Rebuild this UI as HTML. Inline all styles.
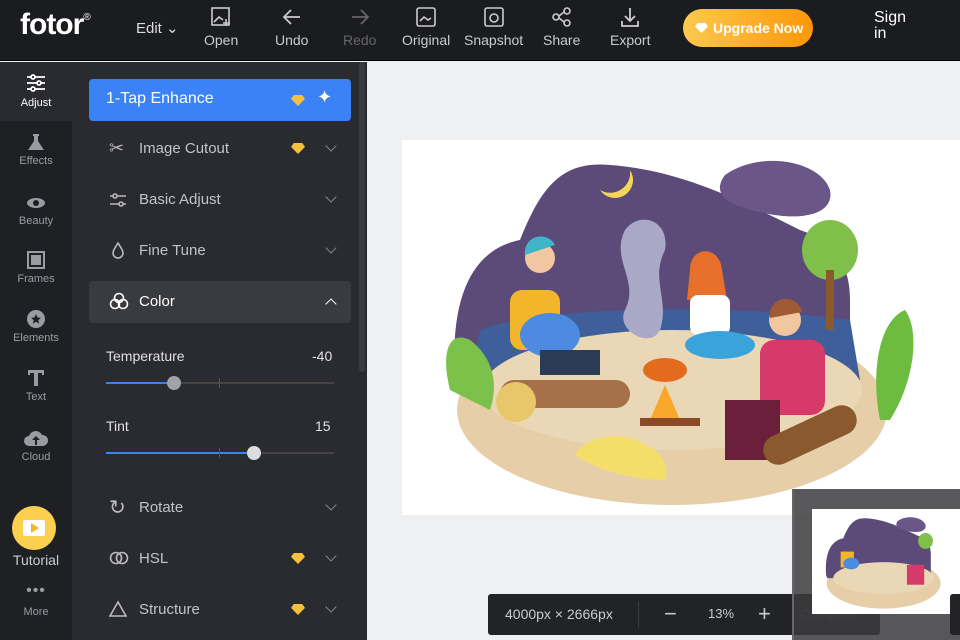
<!DOCTYPE html><html><head><meta charset="utf-8"><style>
*{margin:0;padding:0;box-sizing:border-box}
body{width:960px;height:640px;overflow:hidden;background:#eff0f2;font-family:"Liberation Sans",sans-serif;position:relative}
.top{position:absolute;left:0;top:0;width:960px;height:61px;background:#1b1c1f;border-bottom:1px solid #000}
.logo{position:absolute;left:20px;top:8px;color:#fff;font-size:30px;font-weight:bold;letter-spacing:-1px}
.logo sup{font-size:10px;font-weight:normal;vertical-align:top;position:relative;top:4px}
.tb{position:absolute;top:6px;color:#c9cbd0;font-size:14px;text-align:center}
.tb svg{display:block;margin:0 auto 4px}
.rail{position:absolute;left:0;top:62px;width:72px;height:578px;background:#1f2024}
.ri{position:absolute;left:0;width:72px;text-align:center;color:#9a9ca3;font-size:11px}
.panel{position:absolute;left:72px;top:62px;width:295px;height:578px;background:#2a2b30}
.row{position:absolute;left:17px;width:262px;height:42px;color:#c1c3c9;font-size:15px}
.row .t{position:absolute;left:50px;top:12px}
.chev{position:absolute;right:16px;top:14px;width:8px;height:8px;border-right:1.5px solid #888;border-bottom:1.5px solid #888;transform:rotate(45deg)}
.dia{position:absolute;width:14px;height:11px;background:#f4c03d;clip-path:polygon(20% 0,80% 0,100% 35%,50% 100%,0 35%)}
</style></head><body>
<div class="top">
<div class="logo">fotor<sup>®</sup></div>
<div class="tb" style="left:136px;top:19px;font-size:15px;color:#ddd">Edit ⌄</div>
<div class="tb" style="left:204px"><svg width="22" height="22" viewBox="0 0 22 22" fill="none" stroke="#ccc" stroke-width="1.6"><rect x="2" y="2" width="17" height="17"/><path d="M4 16l5-5 4 3"/><path d="M16 13v7M13 17h7"/></svg>Open</div>
<div class="tb" style="left:275px"><svg width="22" height="22" viewBox="0 0 22 22" fill="none" stroke="#ccc" stroke-width="1.8"><path d="M19 11H4M10 4l-7 7 7 7"/></svg>Undo</div>
<div class="tb" style="left:343px;color:#666"><svg width="22" height="22" viewBox="0 0 22 22" fill="none" stroke="#666" stroke-width="1.8"><path d="M3 11h15M12 4l7 7-7 7"/></svg>Redo</div>
<div class="tb" style="left:402px"><svg width="22" height="22" viewBox="0 0 22 22" fill="none" stroke="#ccc" stroke-width="1.6"><rect x="2" y="2" width="18" height="18" rx="2"/><path d="M5 15l4-4 4 3 3-2"/></svg>Original</div>
<div class="tb" style="left:464px"><svg width="22" height="22" viewBox="0 0 22 22" fill="none" stroke="#ccc" stroke-width="1.6"><rect x="2" y="2" width="18" height="18" rx="2"/><circle cx="11" cy="12" r="4"/></svg>Snapshot</div>
<div class="tb" style="left:543px"><svg width="22" height="22" viewBox="0 0 22 22" fill="none" stroke="#ccc" stroke-width="1.6"><circle cx="5" cy="11" r="3"/><circle cx="16" cy="5" r="3"/><circle cx="16" cy="17" r="3"/><path d="M8 10l5-4M8 12l5 4"/></svg>Share</div>
<div class="tb" style="left:610px"><svg width="22" height="22" viewBox="0 0 22 22" fill="none" stroke="#ccc" stroke-width="1.8"><path d="M11 2v13M6 10l5 5 5-5M3 15v5h16v-5"/></svg>Export</div>
<div style="position:absolute;left:683px;top:9px;width:130px;height:38px;border-radius:19px;background:linear-gradient(90deg,#fcc94e,#fd9708);color:#fff;font-weight:bold;font-size:14px;line-height:38px;padding-left:30px">Upgrade Now<span style="position:absolute;left:12px;top:14px;width:13px;height:10px;background:#fff;clip-path:polygon(20% 0,80% 0,100% 35%,50% 100%,0 35%)"></span></div>
<div style="position:absolute;left:874px;top:10px;color:#fff;font-size:16px;line-height:16px">Sign<br>in</div>
</div>
<div class="rail">
<div style="position:absolute;left:0;top:0;width:72px;height:59px;background:#2a2b30"></div>
<div class="ri" style="top:10px;color:#fff"><svg width="22" height="22" viewBox="0 0 22 22" stroke="#fff" stroke-width="1.8" fill="#2a2b30"><path d="M2 5h18M2 11h18M2 17h18"/><circle cx="8" cy="5" r="2"/><circle cx="14" cy="11" r="2"/><circle cx="8" cy="17" r="2"/></svg><br>Adjust</div>
<div class="ri" style="top:70px"><svg width="20" height="20" viewBox="0 0 20 20" fill="#9a9ca3"><path d="M7 2h6v2h-1v5l6 9H2l6-9V4H7z"/></svg><br>Effects</div>
<div class="ri" style="top:130px"><svg width="22" height="20" viewBox="0 0 22 20" fill="#9a9ca3"><ellipse cx="11" cy="11" rx="9" ry="5"/><circle cx="11" cy="11" r="3" fill="#1f2024"/></svg><br>Beauty</div>
<div class="ri" style="top:188px"><svg width="20" height="20" viewBox="0 0 20 20" fill="none" stroke="#9a9ca3" stroke-width="2"><rect x="2" y="2" width="16" height="16"/><rect x="6" y="6" width="8" height="8" fill="#9a9ca3"/></svg><br>Frames</div>
<div class="ri" style="top:247px"><svg width="20" height="20" viewBox="0 0 20 20"><circle cx="10" cy="10" r="9" fill="#9a9ca3"/><path d="M10 5l1.5 3.5 3.5.3-2.7 2.3.9 3.6L10 12.8 6.8 14.7l.9-3.6L5 8.8l3.5-.3z" fill="#1f2024"/></svg><br>Elements</div>
<div class="ri" style="top:306px"><svg width="20" height="20" viewBox="0 0 20 20" fill="#9a9ca3"><path d="M2 2h16v5h-2V5h-4v13H8V5H4v2H2z"/></svg><br>Text</div>
<div class="ri" style="top:366px"><svg width="26" height="20" viewBox="0 0 26 20" fill="#9a9ca3"><path d="M6 18a5 5 0 010-10 7 7 0 0113-1 5 5 0 011 11z"/><path d="M13 8l-4 4h3v5h2v-5h3z" fill="#1f2024"/></svg><br>Cloud</div>
<div style="position:absolute;left:12px;top:444px;width:44px;height:44px;border-radius:50%;background:#fcd04f"><div style="position:absolute;left:11px;top:14px;width:22px;height:16px;background:#fff;border-radius:2px"></div><div style="position:absolute;left:19px;top:17px;border-left:8px solid #f3b820;border-top:5px solid transparent;border-bottom:5px solid transparent"></div></div>
<div class="ri" style="top:490px;font-size:14px;color:#c9cbd0">Tutorial</div>
<div class="ri" style="top:524px;font-size:16px;letter-spacing:1px;line-height:10px">•••</div>
<div class="ri" style="top:544px">More</div>
</div>
<div class="panel">
<div style="position:absolute;left:287px;top:0;width:6px;height:310px;background:#3a3b40;border-radius:3px"></div>
<div class="row" style="top:17px;background:#3b82f6;border-radius:4px;color:#fff"><span class="t" style="left:17px;top:11px;font-size:16px">1-Tap Enhance</span><span class="dia" style="left:202px;top:16px"></span><span style="position:absolute;left:228px;top:8px;font-size:18px">✦</span></div>
<div class="row" style="top:66px"><span style="position:absolute;left:20px;top:10px;font-size:18px;color:#bbb">✂</span><span class="t">Image Cutout</span><span class="dia" style="left:202px;top:15px"></span><span class="chev"></span></div>
<div class="row" style="top:117px"><svg style="position:absolute;left:20px;top:13px" width="18" height="16" viewBox="0 0 18 16" stroke="#bbb" stroke-width="1.6" fill="#2a2b30"><path d="M1 4h16M1 12h16"/><circle cx="6" cy="4" r="2"/><circle cx="12" cy="12" r="2"/></svg><span class="t">Basic Adjust</span><span class="chev"></span></div>
<div class="row" style="top:168px"><svg style="position:absolute;left:22px;top:12px" width="14" height="18" viewBox="0 0 14 18" stroke="#bbb" stroke-width="1.6" fill="none"><path d="M7 1C4 6 2 8 2 11a5 5 0 0010 0c0-3-2-5-5-10z"/></svg><span class="t">Fine Tune</span><span class="chev"></span></div>
<div class="row" style="top:219px;background:#3a3b40;border-radius:4px;color:#fff"><svg style="position:absolute;left:20px;top:11px" width="20" height="18" viewBox="0 0 20 18" stroke="#fff" stroke-width="1.6" fill="none"><circle cx="10" cy="6" r="4.5"/><circle cx="6" cy="12" r="4.5"/><circle cx="14" cy="12" r="4.5"/></svg><span class="t">Color</span><span class="chev" style="transform:rotate(225deg);top:19px;border-color:#fff"></span></div>
<div style="position:absolute;left:34px;top:286px;color:#e0e0e4;font-size:14px">Temperature</div>
<div style="position:absolute;left:240px;top:286px;color:#e0e0e4;font-size:14px">-40</div>
<div style="position:absolute;left:34px;top:320px;width:228px;height:2px;background:#444"></div>
<div style="position:absolute;left:34px;top:320px;width:68px;height:2px;background:#3b82f6"></div>
<div style="position:absolute;left:147px;top:316px;width:1px;height:10px;background:#555"></div>
<div style="position:absolute;left:95px;top:314px;width:14px;height:14px;border-radius:50%;background:#a0a2a8"></div>
<div style="position:absolute;left:34px;top:356px;color:#e0e0e4;font-size:14px">Tint</div>
<div style="position:absolute;left:243px;top:356px;color:#e0e0e4;font-size:14px">15</div>
<div style="position:absolute;left:34px;top:390px;width:228px;height:2px;background:#444"></div>
<div style="position:absolute;left:34px;top:390px;width:148px;height:2px;background:#3b82f6"></div>
<div style="position:absolute;left:147px;top:386px;width:1px;height:10px;background:#555"></div>
<div style="position:absolute;left:175px;top:384px;width:14px;height:14px;border-radius:50%;background:#ddd"></div>
<div class="row" style="top:425px"><span style="position:absolute;left:20px;top:8px;font-size:20px;color:#bbb">↻</span><span class="t">Rotate</span><span class="chev"></span></div>
<div class="row" style="top:476px"><svg style="position:absolute;left:20px;top:13px" width="20" height="14" viewBox="0 0 20 14" stroke="#bbb" stroke-width="1.6" fill="none"><circle cx="7" cy="7" r="5.5"/><circle cx="13" cy="7" r="5.5"/></svg><span class="t">HSL</span><span class="dia" style="left:202px;top:15px"></span><span class="chev"></span></div>
<div class="row" style="top:527px"><svg style="position:absolute;left:20px;top:11px" width="18" height="18" viewBox="0 0 18 18" stroke="#bbb" stroke-width="1.6" fill="none"><path d="M9 2L1 16h16z"/></svg><span class="t">Structure</span><span class="dia" style="left:202px;top:15px"></span><span class="chev"></span></div>
</div>
<div style="position:absolute;left:402px;top:140px;width:558px;height:375px;background:#fff">
<svg width="558" height="375" viewBox="402 140 558 375">
<ellipse cx="672" cy="410" rx="215" ry="95" fill="#e6cfa8"/>
<path d="M455 380C450 300 470 250 520 240C540 190 560 160 610 165C680 170 740 200 800 230C830 240 850 260 850 300L850 390L460 390Z" fill="#5c4a78"/>
<path d="M725 175C760 150 820 160 830 190C835 215 800 222 760 212C730 206 710 195 725 175Z" fill="#6b5688"/>
<path d="M480 330C530 310 700 300 850 320L860 380 470 380Z" fill="#3f5f9a"/>
<ellipse cx="672" cy="390" rx="190" ry="60" fill="#ead7b6"/>
<ellipse cx="830" cy="250" rx="28" ry="30" fill="#7fbf4a"/>
<rect x="826" y="270" width="8" height="60" fill="#8a5a2e"/>
<path d="M450 390C440 350 450 330 470 340C490 355 500 380 490 410Z" fill="#7cc24a"/>
<path d="M880 420C870 370 880 320 905 310C920 330 915 380 890 420Z" fill="#6dbb3f"/>
<path d="M625 230C610 260 640 280 625 310C615 330 650 350 660 330C670 300 650 280 665 250C670 220 640 210 625 230Z" fill="#a9a9c7"/>
<path d="M600 190a20 20 0 0030-20 15 15 0 01-30 20z" fill="#f5d658"/>
<rect x="510" y="290" width="50" height="60" rx="12" fill="#f2b52c"/>
<circle cx="540" cy="258" r="15" fill="#f2c6a0"/><path d="M525 255a16 16 0 0130-10z" fill="#3fb6c8"/>
<ellipse cx="550" cy="335" rx="30" ry="22" fill="#4d8be0"/>
<rect x="540" y="350" width="60" height="25" fill="#2b3a55"/>
<rect x="500" y="380" width="130" height="28" rx="14" fill="#a6714a"/>
<circle cx="516" cy="402" r="20" fill="#e8c66a"/>
<circle cx="705" cy="268" r="14" fill="#f2c6a0"/><path d="M690 270c0-25 30-25 32 0l5 30h-40z" fill="#e8702d"/>
<rect x="690" y="295" width="40" height="40" rx="8" fill="#fff"/>
<ellipse cx="720" cy="345" rx="35" ry="14" fill="#3aa3d9"/>
<circle cx="785" cy="320" r="16" fill="#f2c6a0"/><path d="M770 318a16 16 0 0132-6z" fill="#a05a35"/>
<rect x="760" y="340" width="65" height="75" rx="14" fill="#d63a6b"/>
<rect x="725" y="400" width="55" height="60" fill="#6a1f3a"/>
<rect x="760" y="420" width="100" height="30" rx="15" transform="rotate(-25 810 435)" fill="#8a5a2e"/>
<ellipse cx="665" cy="370" rx="22" ry="12" fill="#e36b1e"/>
<path d="M650 420l15-35 15 35z" fill="#f8a72b"/>
<rect x="640" y="418" width="60" height="8" fill="#8a4a2a"/>
<path d="M575 455c10-20 50-25 70-10 15 5 25 20 20 35-20 0-60 -5-90-25z" fill="#f4de6a"/>
</svg>
</div>
<div style="position:absolute;left:488px;top:594px;width:392px;height:41px;background:#222327;border-radius:3px;color:#c9cbd0;font-size:14px">
<span style="position:absolute;left:17px;top:12px">4000px × 2666px</span>
<div style="position:absolute;left:150px;top:8px;width:1px;height:26px;background:#3a3b40"></div>
<span style="position:absolute;left:176px;top:7px;font-size:22px">−</span>
<span style="position:absolute;left:220px;top:12px;font-size:13px">13%</span>
<span style="position:absolute;left:270px;top:7px;font-size:22px">+</span>
<span style="position:absolute;left:312px;top:12px;color:#555">Compare</span>
</div>
<div style="position:absolute;left:792px;top:489px;width:168px;height:151px;background:rgba(60,60,62,0.85);border-left:2px solid #666"></div>
<div style="position:absolute;left:812px;top:509px;width:148px;height:105px;background:#fff">
<svg width="148" height="105" viewBox="402 140 558 375"><ellipse cx="672" cy="410" rx="215" ry="95" fill="#e6cfa8"/><path d="M455 380C450 300 470 250 520 240C540 190 560 160 610 165C680 170 740 200 800 230C830 240 850 260 850 300L850 390L460 390Z" fill="#5c4a78"/><path d="M725 175C760 150 820 160 830 190C835 215 800 222 760 212C730 206 710 195 725 175Z" fill="#6b5688"/><ellipse cx="672" cy="390" rx="190" ry="60" fill="#ead7b6"/><rect x="510" y="290" width="50" height="60" fill="#f2b52c"/><ellipse cx="550" cy="335" rx="30" ry="22" fill="#4d8be0"/><rect x="760" y="340" width="65" height="75" fill="#d63a6b"/><ellipse cx="830" cy="250" rx="28" ry="30" fill="#7fbf4a"/></svg>
</div>
<div style="position:absolute;left:950px;top:594px;width:10px;height:41px;background:#222327;border-radius:3px 0 0 3px"></div>
</body></html>
